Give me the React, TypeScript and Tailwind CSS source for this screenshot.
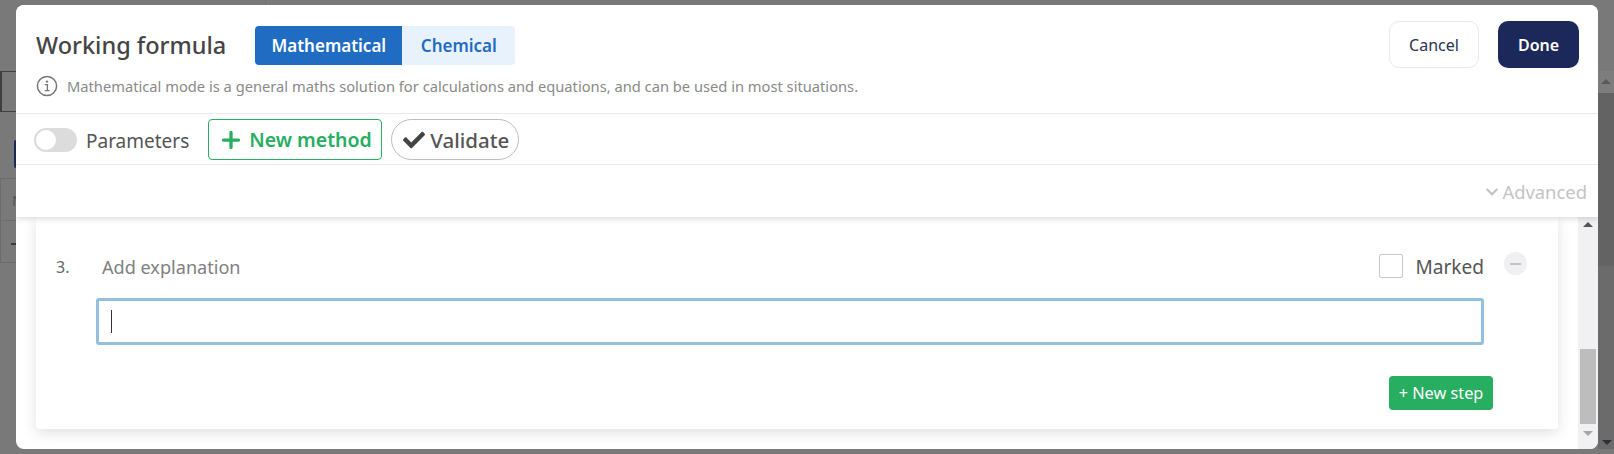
import React from 'react'
import { Plus } from 'lucide-react'
import { FaCheck, FaChevronDown } from 'react-icons/fa'

const font = { fontFamily: '"Noto Sans", "Open Sans", sans-serif' }

const InfoIcon = () => (
  <svg width="22" height="22" viewBox="0 0 22 22" fill="none" className="shrink-0 text-[#777]">
    <circle cx="11" cy="11" r="9.6" stroke="currentColor" strokeWidth="1.5" />
    <circle cx="11" cy="6.6" r="1.2" fill="currentColor" />
    <path d="M8.8 9.6H11.4V15.4M8.6 15.6H13.6" stroke="currentColor" strokeWidth="1.4" />
  </svg>
)

const Backdrop = () => (
  <div className="absolute inset-0 overflow-hidden">
    <div className="absolute left-[265px] top-0 h-[5px] w-px bg-[#6f6f6f]" />
    <div className="absolute left-0 top-[71px] h-[41px] w-[16px] border border-l-2 border-r-0 border-[#3f3f3f]" />
    <div className="absolute left-[14px] top-[140px] h-[28px] w-[2px] rounded-l bg-[#1b2a55]" />
    <div className="absolute left-0 top-[178px] h-[85px] w-[16px] border border-r-0 border-[#6c6c6c]" />
    <div className="absolute left-0 top-[220px] h-px w-[16px] bg-[#6c6c6c]" />
    <div className="absolute left-[12px] top-[189px] text-[15px] leading-[22px] text-[#555]">N</div>
    <div className="absolute left-[11px] top-[243px] h-[2px] w-[5px] bg-[#3a3a3a]" />
    <div className="absolute right-0 top-[71px] h-[378px] w-[16px] bg-[#6b6b6b]" />
    <div className="absolute right-0 top-[71px] flex h-[22px] w-[16px] items-start justify-center bg-[#7d7d7d] pt-[8px]">
      <div className="h-0 w-0 border-x-[5px] border-b-[5px] border-x-transparent border-b-[#5a5a5a]" />
    </div>
    <div className="absolute right-0 top-[71px] mt-[22px] h-[173px] w-[16px] bg-[#636363]" />
    <div className="absolute right-[2px] top-[440px] h-0 w-0 border-x-[5px] border-t-[5px] border-x-transparent border-t-[#2e2e38]" />
  </div>
)

const Header = () => (
  <div className="relative z-10 flex h-[212px] shrink-0 flex-col bg-white shadow-[0_2px_6px_rgba(0,0,0,0.14)]">
    <div className="flex h-[109px] shrink-0 border-b border-[#e9ebef] pl-[20px] pr-[19px]">
      <div className="flex-1">
        <div className="mt-[21px] flex items-center">
          <h1 className="text-[23.5px] font-medium leading-[39px] text-[#444]">Working formula</h1>
          <div className="ml-[29px] flex h-[39px] overflow-hidden rounded-[4px] text-[17px] font-semibold">
            <div className="flex w-[147px] items-center justify-center bg-[#1f6cc2] text-white">Mathematical</div>
            <div className="flex w-[113px] items-center justify-center bg-[#e8f2fd] text-[#1f6cc2]">Chemical</div>
          </div>
        </div>
        <div className="mt-[9px] flex items-center text-[14.7px] leading-[24px] text-[#8a8a8a]">
          <InfoIcon />
          <span className="ml-[9px]">
            Mathematical mode is a general maths solution for calculations and equations, and can be used in most situations.
          </span>
        </div>
      </div>
      <div className="mt-[16px] flex h-[47px] gap-[19px] text-[16px]">
        <button className="w-[90px] rounded-[10px] border border-[#e8e9ee] bg-white text-[#2b3350]">Cancel</button>
        <button className="w-[81px] rounded-[10px] bg-[#1b2859] font-semibold text-white">Done</button>
      </div>
    </div>
    <div className="flex h-[51px] shrink-0 items-center border-b border-[#e9ebef] pl-[18px] pt-[1px]">
      <div className="flex h-[24px] w-[43px] items-center rounded-full bg-[#dcdcdc] pl-[2px]">
        <div className="h-[20px] w-[20px] rounded-full bg-white" />
      </div>
      <span className="ml-[9px] mt-[3px] text-[19px] text-[#555]">Parameters</span>
      <button className="ml-[19px] flex h-[41px] w-[174px] items-center rounded-[4px] border border-[#27ae60] pl-[9px] text-[19.5px] font-semibold text-[#27ae60]">
        <Plus size={26} strokeWidth={3} />
        <span className="ml-[5px] mt-[1px]">New method</span>
      </button>
      <button className="ml-[9px] flex h-[41px] w-[128px] items-center rounded-full border border-[#bdbdbd] pl-[11px] text-[20.5px] font-medium text-[#555]">
        <FaCheck size={22} className="text-[#444]" />
        <span className="ml-[5px] mt-[1px]">Validate</span>
      </button>
    </div>
    <div className="flex flex-1 items-center justify-end pr-[11px] pt-[2px] text-[18.4px] text-[#c4c4c4]">
      <FaChevronDown size={14} />
      <span className="ml-[3px]">Advanced</span>
    </div>
  </div>
)

const Step = () => (
  <div className="ml-[20px] mt-0 h-[212px] w-[1522px] rounded-b-[4px] bg-white shadow-[0_4px_14px_rgba(0,0,0,0.12)]">
    <div className="flex h-[81px] items-start pl-[20px] pt-[36px]">
      <span className="w-[46px] text-[16px] leading-[28px] text-[#666]">3.</span>
      <span className="flex-1 text-[18.1px] leading-[28px] text-[#808080]">Add explanation</span>
      <div className="mt-[1px] h-[24px] w-[24px] rounded-[2px] border border-[#c8c8c8] bg-white" />
      <span className="ml-[12px] text-[19.1px] leading-[28px] text-[#555]">Marked</span>
      <div className="ml-[20px] mr-[31px] mt-[-1px] flex h-[23px] w-[23px] items-center justify-center rounded-full bg-[#f0f0f3]">
        <div className="h-[2px] w-[11px] bg-[#c4c4c8]" />
      </div>
    </div>
    <div className="ml-[60px] flex h-[47px] w-[1388px] items-center rounded-[3px] border-[3px] border-[#93c0de] bg-white pl-[12px]">
      <div className="h-[23px] w-px bg-[#333]" />
    </div>
    <div className="mt-[31px] flex justify-end pr-[65px]">
      <button className="h-[34px] w-[104px] rounded-[4px] bg-[#27ae60] text-[16.3px] text-white">+ New step</button>
    </div>
  </div>
)

export default function App() {
  return (
    <div className="relative h-[454px] w-[1614px] overflow-hidden bg-[#797979]" style={font}>
      <Backdrop />
      <div className="absolute left-[16px] top-[5px] flex h-[444px] w-[1582px] flex-col overflow-hidden rounded-[8px] bg-white">
        <Header />
        <div className="flex flex-1">
          <div className="flex-1">
            <Step />
          </div>
          <div className="flex w-[20px] flex-col items-center bg-[#f1f1f4]">
            <div className="mt-[5px] h-0 w-0 border-x-[5px] border-b-[5px] border-x-transparent border-b-[#555]" />
            <div className="mt-[122px] h-[75px] w-[16px] bg-[#bdbdbd]" />
            <div className="mt-[7px] h-0 w-0 border-x-[5px] border-t-[5px] border-x-transparent border-t-[#a6a6a6]" />
          </div>
        </div>
      </div>
    </div>
  )
}
